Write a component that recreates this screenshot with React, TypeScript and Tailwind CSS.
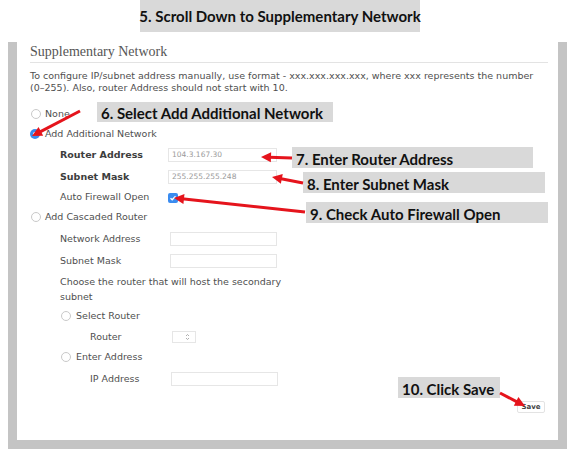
import React from "react";

type Pt = [number, number];

function Arrow({ from, to }: { from: Pt; to: Pt }) {
  const [x1, y1] = from;
  const [x2, y2] = to;
  const dx = x2 - x1;
  const dy = y2 - y1;
  const len = Math.hypot(dx, dy);
  const ux = dx / len;
  const uy = dy / len;
  const head = 10;
  const half = 5;
  const bx = x2 - ux * head;
  const by = y2 - uy * head;
  const pts = `${x2},${y2} ${bx - uy * half},${by + ux * half} ${bx + uy * half},${by - ux * half}`;
  return (
    <g>
      <line x1={x1} y1={y1} x2={bx + ux * 2} y2={by + uy * 2} stroke="#e5141c" strokeWidth={3} />
      <polygon points={pts} fill="#e5141c" />
    </g>
  );
}

function Radio({ checked }: { checked?: boolean }) {
  if (checked) {
    return (
      <span className="w-[10px] h-[10px] rounded-full bg-[#3a8cf0] flex items-center justify-center">
        <span className="w-[4px] h-[4px] rounded-full bg-white" />
      </span>
    );
  }
  return <span className="w-[10px] h-[10px] rounded-full border border-[#c9c9c9] bg-white" />;
}

function Field({ value, w = "w-[109px]" }: { value?: string; w?: string }) {
  return (
    <div className={`${w} h-[14px] border border-[#e6e6e6] bg-white flex items-center pl-[3px] text-[7.5px] text-[#9a9a9a]`}>
      {value}
    </div>
  );
}

function Note({ children, className }: { children: React.ReactNode; className: string }) {
  return (
    <div
      className={`absolute bg-[#d9d9d9] flex items-end pl-[4px] pb-[0px] text-[15px] leading-[18px] font-bold text-[#111] whitespace-nowrap ${className}`}
    >
      {children}
    </div>
  );
}

export default function App() {
  return (
    <div className="relative w-[574px] h-[455px] bg-white overflow-hidden font-['DejaVu_Sans',sans-serif] text-[9.5px] text-[#4f4f4f]">
      <div className="ml-[140px] w-[280px] h-[32px] bg-[#d9d9d9] flex items-center justify-center whitespace-nowrap font-['Lato',sans-serif] font-bold text-[15px] text-[#111]">
        5. Scroll Down to Supplementary Network
      </div>

      <div className="ml-[8px] mt-[10px] w-[559px] h-[407px] border-x-[9px] border-b-[9px] border-[#c4c4c4] pt-[2px] pl-[13px] pr-[10px] flex flex-col">
        <div className="h-[19px] border-b border-[#e3e3e3] font-['Liberation_Serif',serif] text-[14px] leading-[16px] text-[#555]">
          Supplementary Network
        </div>
        <p className="mt-[7px] leading-[12px] whitespace-nowrap">
          To configure IP/subnet address manually, use format - xxx.xxx.xxx.xxx, where xxx represents the number
          <br />
          (0–255). Also, router Address should not start with 10.
        </p>

        <div className="mt-[10px] h-[20px] flex items-center gap-[4px] pl-[1px]">
          <Radio />
          <span>None</span>
        </div>
        <div className="h-[20px] flex items-center gap-[5px]">
          <Radio checked />
          <span>Add Additional Network</span>
        </div>

        <div className="pl-[30px]">
          <div className="h-[22px] flex items-center">
            <span className="w-[108px] font-bold text-[#3d3d3d]">Router Address</span>
            <Field value="104.3.167.30" />
          </div>
          <div className="h-[22px] flex items-center">
            <span className="w-[108px] font-bold text-[#3d3d3d]">Subnet Mask</span>
            <Field value="255.255.255.248" />
          </div>
          <div className="h-[19px] flex items-center">
            <span className="w-[108px]">Auto Firewall Open</span>
            <span className="w-[10px] h-[10px] rounded-[2px] bg-[#3a8cf0] flex items-center justify-center">
              <svg width="8" height="8" viewBox="0 0 8 8">
                <path d="M1.5 4.2 L3.2 5.8 L6.5 2.2" stroke="white" strokeWidth="1.3" fill="none" />
              </svg>
            </span>
          </div>
        </div>

        <div className="h-[20px] flex items-center gap-[4px] pl-[1px]">
          <Radio />
          <span>Add Cascaded Router</span>
        </div>

        <div className="pl-[30px]">
          <div className="h-[24px] flex items-center">
            <span className="w-[110px]">Network Address</span>
            <Field w="w-[107px]" />
          </div>
          <div className="h-[20px] flex items-center">
            <span className="w-[110px]">Subnet Mask</span>
            <Field w="w-[107px]" />
          </div>
          <p className="mt-[3px] leading-[15px]">
            Choose the router that will host the secondary
            <br />
            subnet
          </p>
          <div className="mt-[2px] h-[20px] flex items-center gap-[5px] pl-[1px]">
            <Radio />
            <span>Select Router</span>
          </div>
          <div className="h-[22px] flex items-center pl-[30px]">
            <span className="w-[82px]">Router</span>
            <div className="w-[24px] h-[12px] border border-[#e6e6e6] flex items-center justify-end pr-[5px]">
              <svg width="5" height="8" viewBox="0 0 5 8">
                <path d="M1 3 L2.5 1.5 L4 3 M1 5 L2.5 6.5 L4 5" stroke="#9a9a9a" strokeWidth="0.8" fill="none" />
              </svg>
            </div>
          </div>
          <div className="h-[18px] flex items-center gap-[5px] pl-[1px]">
            <Radio />
            <span>Enter Address</span>
          </div>
          <div className="h-[26px] flex items-center pl-[30px]">
            <span className="w-[81px]">IP Address</span>
            <Field w="w-[107px]" />
          </div>
        </div>

        <div className="mt-[9px] flex justify-end pr-[3px]">
          <div className="w-[28px] h-[12px] border border-[#e3e3e3] rounded-[2px] flex items-center justify-center text-[7px] font-bold text-[#444]">
            Save
          </div>
        </div>
      </div>

      <div className="font-['Lato',sans-serif]">
        <Note className="left-[97px] top-[102px] w-[236px] h-[20px]">6. Select Add Additional Network</Note>
        <Note className="left-[292px] top-[147px] w-[241px] h-[21px]">7. Enter Router Address</Note>
        <Note className="left-[303px] top-[172px] w-[242px] h-[21px]">8. Enter Subnet Mask</Note>
        <Note className="left-[306px] top-[202px] w-[242px] h-[21px]">9. Check Auto Firewall Open</Note>
        <Note className="left-[398px] top-[377px] w-[102px] h-[21px]">10. Click Save</Note>
      </div>

      <svg className="absolute inset-0 pointer-events-none" width="574" height="455">
        <Arrow from={[80, 111]} to={[32, 136]} />
        <Arrow from={[292, 158]} to={[261, 157]} />
        <Arrow from={[303, 183]} to={[272, 177]} />
        <Arrow from={[305, 212]} to={[174, 198]} />
        <Arrow from={[500, 393]} to={[525, 406]} />
      </svg>
    </div>
  );
}
